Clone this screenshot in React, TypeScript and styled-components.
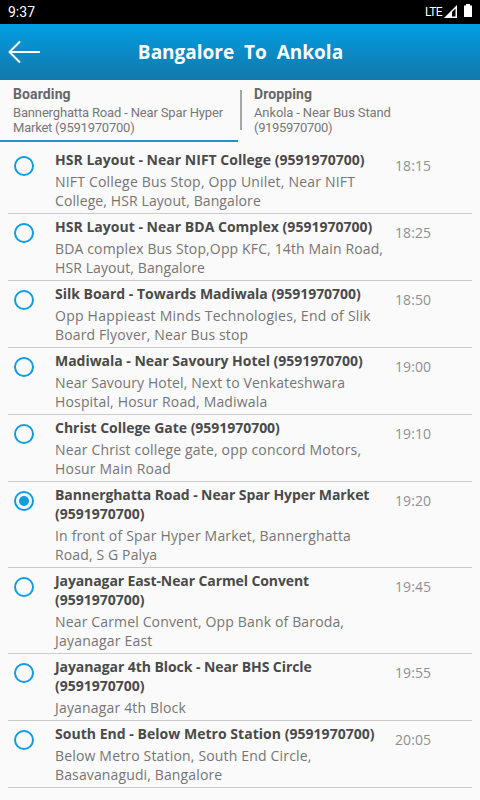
import React from "react";
import styled, { createGlobalStyle } from "styled-components";

const GlobalStyle = createGlobalStyle`
  * { box-sizing: border-box; }
  body { margin: 0; background: #fafafa; }
`;

const Screen = styled.div`
  width: 480px;
  height: 800px;
  overflow: hidden;
  background: #fafafa;
  font-family: "Open Sans", sans-serif;
  display: flex;
  flex-direction: column;
`;

const StatusBar = styled.div`
  height: 24px;
  flex: none;
  background: #000;
  color: #fff;
  display: flex;
  align-items: center;
  justify-content: space-between;
  padding: 0 7px 0 8px;
  font: 14px/24px Roboto, sans-serif;
`;

const StatusIcons = styled.div`
  display: flex;
  align-items: center;
  font-size: 12px;
  letter-spacing: -0.6px;
`;

const Header = styled.header`
  height: 56px;
  flex: none;
  background: linear-gradient(#029fe3, #1277ab);
  display: flex;
  align-items: center;
  padding: 0 8px;
`;

const Title = styled.h1`
  flex: 1;
  margin: 0 31px 0 0;
  text-align: center;
  color: #fff;
  font-size: 19px;
  font-weight: 700;
  white-space: pre;
`;

const Tabs = styled.div`
  display: flex;
  flex: none;
  height: 67px;
  font-family: Roboto, sans-serif;
`;

const Tab = styled.div<{ $active?: boolean }>`
  flex: none;
  width: 238px;
  height: 62px;
  padding: 6px 0 0 ${(p) => (p.$active ? 13 : 12)}px;
  border-bottom: 2px solid ${(p) => (p.$active ? "#1d94d0" : "transparent")};
`;

const TabDivider = styled.div`
  flex: none;
  width: 2px;
  height: 40px;
  margin: 10px 0 0 2px;
  background: #a5a5a5;
`;

const TabName = styled.div`
  font-size: 14px;
  line-height: 17px;
  font-weight: 700;
  letter-spacing: 0.12px;
  color: #666;
`;

const TabStop = styled.div`
  margin-top: 2px;
  font-size: 13px;
  line-height: 15px;
  color: #777;
`;

const List = styled.div`
  padding: 0 8px;
`;

const Row = styled.div`
  display: grid;
  grid-template-columns: 47px 340px 1fr;
  border-bottom: 1px solid #ccc;
  padding: 3px 0;
`;

const Radio = styled.div<{ $checked: boolean }>`
  width: 20px;
  height: 20px;
  margin: 6px 0 0 6px;
  border: 2px solid #0f9ddd;
  border-radius: 50%;
  display: grid;
  place-items: center;
  &::after {
    content: "";
    width: 10px;
    height: 10px;
    border-radius: 50%;
    background: ${(p) => (p.$checked ? "#0f9ddd" : "transparent")};
  }
`;

const Name = styled.div`
  font-size: 14px;
  line-height: 19px;
  font-weight: 700;
  color: #4a4a4a;
`;

const Address = styled.div`
  margin-top: 3px;
  font-size: 14px;
  line-height: 19px;
  color: #757575;
`;

const Line = styled.div<{ $tracking: number }>`
  white-space: pre;
  letter-spacing: ${(p) => p.$tracking}px;
`;

const Time = styled.div`
  margin-top: 6px;
  font-size: 14px;
  line-height: 19px;
  letter-spacing: 0.08px;
  color: #909090;
`;

// A line of text and its letter spacing in pixels.
type TextLine = [text: string, tracking: number];

interface Stop {
  name: TextLine[];
  address: TextLine[];
  time: string;
}

const stops: Stop[] = [
  {
    name: [["HSR Layout - Near NIFT College (9591970700)", 0.02]],
    address: [["NIFT College Bus Stop, Opp Unilet, Near NIFT", 0.19], ["College, HSR Layout, Bangalore", 0.1]],
    time: "18:15",
  },
  {
    name: [["HSR Layout - Near BDA Complex (9591970700)", 0.02]],
    address: [["BDA complex Bus Stop,Opp KFC, 14th Main Road,", 0.14], ["HSR Layout, Bangalore", 0.1]],
    time: "18:25",
  },
  {
    name: [["Silk Board - Towards Madiwala (9591970700)", -0.01]],
    address: [["Opp Happieast Minds Technologies, End of Slik", 0.24], ["Board Flyover, Near Bus stop", 0.14]],
    time: "18:50",
  },
  {
    name: [["Madiwala - Near Savoury Hotel (9591970700)", -0.03]],
    address: [["Near Savoury Hotel, Next to Venkateshwara", 0.12], ["Hospital, Hosur Road, Madiwala", 0.16]],
    time: "19:00",
  },
  {
    name: [["Christ College Gate (9591970700)", -0.03]],
    address: [["Near Christ college gate, opp concord Motors,", 0.17], ["Hosur Main Road", 0.2]],
    time: "19:10",
  },
  {
    name: [["Bannerghatta Road - Near Spar Hyper Market", -0.08], ["(9591970700)", 0]],
    address: [["In front of Spar Hyper Market, Bannerghatta", 0.18], ["Road, S G Palya", 0.13]],
    time: "19:20",
  },
  {
    name: [["Jayanagar East-Near Carmel Convent", -0.1], ["(9591970700)", 0]],
    address: [["Near Carmel Convent, Opp Bank of Baroda,", 0.15], ["Jayanagar East", 0.2]],
    time: "19:45",
  },
  {
    name: [["Jayanagar 4th Block - Near BHS Circle", -0.07], ["(9591970700)", 0]],
    address: [["Jayanagar 4th Block", 0.17]],
    time: "19:55",
  },
  {
    name: [["South End - Below Metro Station (9591970700)", 0.03]],
    address: [["Below Metro Station, South End Circle,", 0.17], ["Basavanagudi, Bangalore", 0.13]],
    time: "20:05",
  },
];

const Lines = ({ lines }: { lines: TextLine[] }) => (
  <>
    {lines.map(([text, tracking]) => (
      <Line key={text} $tracking={tracking}>
        {text}
      </Line>
    ))}
  </>
);

export default function App() {
  return (
    <Screen>
      <GlobalStyle />
      <StatusBar>
        <span>9:37</span>
        <StatusIcons>
          <span>LTE</span>
          <svg width="31" height="24" viewBox="0 0 31 24">
            <path d="M15 5V18H2Z" fill="#fff" />
            <path d="M10 12l3.5-3.5V16.5H10z" fill="#000" />
            <path d="M22 5.5h2V4h4v1.500h2V17h-8z" fill="#fff" />
          </svg>
        </StatusIcons>
      </StatusBar>
      <Header>
        <svg width="32" height="24" viewBox="0 0 32 24" fill="none" stroke="#fff" strokeWidth="2">
          <path d="M32 12H1M12 1.500L1.500 12L12 22.500" />
        </svg>
        <Title>{"Bangalore  To  Ankola"}</Title>
      </Header>
      <Tabs>
        <Tab $active>
          <TabName>Boarding</TabName>
          <TabStop>
            <Lines lines={[["Bannerghatta Road - Near Spar Hyper", -0.16], ["Market (9591970700)", -0.22]]} />
          </TabStop>
        </Tab>
        <TabDivider />
        <Tab>
          <TabName>Dropping</TabName>
          <TabStop>
            <Lines lines={[["Ankola - Near Bus Stand", -0.12], ["(9195970700)", -0.32]]} />
          </TabStop>
        </Tab>
      </Tabs>
      <List>
        {stops.map((stop) => (
          <Row key={stop.time}>
            <Radio $checked={stop.time === "19:20"} />
            <div>
              <Name>
                <Lines lines={stop.name} />
              </Name>
              <Address>
                <Lines lines={stop.address} />
              </Address>
            </div>
            <Time>{stop.time}</Time>
          </Row>
        ))}
      </List>
    </Screen>
  );
}
